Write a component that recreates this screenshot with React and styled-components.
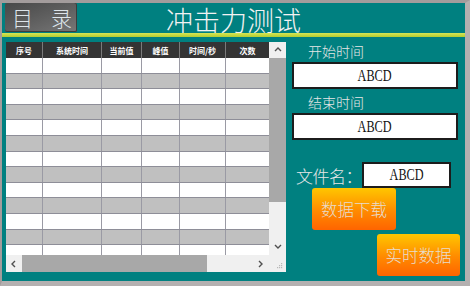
import React from 'react';
import styled, { createGlobalStyle } from 'styled-components';

const Global = createGlobalStyle`
  html, body { margin: 0; padding: 0; background: #ffffff; }
  #root { width: 470px; height: 286px; }
`;

const Frame = styled.div`
  box-sizing: border-box;
  width: 470px;
  height: 286px;
  background: #008080;
  border-style: solid;
  border-color: #a39c9c #b4b0b0 #b4b0b0 #a39c9c;
  border-width: 3px 5px 5px 2px;
  display: flex;
  flex-direction: column;
  font-family: "Noto Sans CJK SC", sans-serif;
  overflow: hidden;
`;

const Header = styled.header`
  height: 30px;
  flex: none;
  display: grid;
  grid-template-columns: 1fr auto 1fr;
  align-items: center;
`;

const MenuButton = styled.div`
  box-sizing: border-box;
  margin-left: 3px;
  width: 72px;
  height: 29px;
  align-self: start;
  justify-self: start;
  display: flex;
  align-items: center;
  gap: 18px;
  padding-left: 7px;
  background: linear-gradient(160deg, #484848 0%, #5c5c5c 45%, #777777 100%);
  border-radius: 2px;
  box-shadow: inset 0 -1px 0 #3c3c3c, inset -1px 0 0 #3c3c3c;
  color: #dde4ea;
  font-size: 21px;
  font-weight: 300;
  line-height: 1;
`;

const Title = styled.h1`
  margin: 0;
  padding-top: 4px;
  font-size: 27px;
  line-height: 26px;
  font-weight: 300;
  color: #f2f2f2;
  white-space: nowrap;
`;

const Rule = styled.div`
  height: 4px;
  flex: none;
  background: linear-gradient(#d6e656, #b2cc30);
`;

const Body = styled.main`
  flex: 1;
  display: flex;
  gap: 6px;
  padding: 5px 0 0 4px;
`;

const Table = styled.section`
  width: 280px;
  height: 230px;
  display: grid;
  grid-template-columns: 263px 17px;
  grid-template-rows: 213px 17px;
`;

const DataArea = styled.div`
  overflow: hidden;
  background: #ffffff;
`;

const COLS = '37px 59px 40px 38px 46px 43px';

const HeadRow = styled.div`
  display: grid;
  grid-template-columns: ${COLS};
  height: 16px;
  background: #343434;
`;

const HeadCell = styled.div`
  display: flex;
  align-items: center;
  justify-content: center;
  color: #ffffff;
  font-size: 8px;
  font-weight: 700;
  border-right: 1px solid #7a7a7a;
  white-space: nowrap;
  &:last-child { border-right: none; }
`;

const Row = styled.div`
  box-sizing: border-box;
  display: grid;
  grid-template-columns: ${COLS};
  height: 15.6px;
  border-bottom: 1px solid #8e8e98;
  background: ${p => (p.$shade ? '#c0c0c0' : '#ffffff')};
`;

const Cell = styled.div`
  border-right: 1px solid #9a9aa4;
  &:last-child { border-right: none; }
`;

const VScroll = styled.div`
  display: flex;
  flex-direction: column;
  background: #f0f0f0;
`;

const HScroll = styled.div`
  display: flex;
  background: #f0f0f0;
`;

const ArrowBox = styled.div`
  flex: none;
  width: ${p => p.$w || 17}px;
  height: ${p => p.$h || 17}px;
  display: flex;
  align-items: center;
  justify-content: center;
  background: #f0f0f0;
`;

const Thumb = styled.div`
  flex: none;
  background: #a8a8a8;
  width: ${p => (p.$horizontal ? `${p.$len}px` : 'auto')};
  height: ${p => (p.$horizontal ? 'auto' : `${p.$len}px`)};
`;

const Track = styled.div`
  flex: 1;
`;

const Corner = styled.div`
  background: #f0f0f0;
  display: flex;
  align-items: flex-end;
  justify-content: flex-end;
  padding: 0 3px 3px 0;
`;

const Panel = styled.aside`
  width: 169px;
  display: flex;
  flex-direction: column;
`;

const Label = styled.div`
  font-size: 14px;
  line-height: 18px;
  height: 18px;
  font-weight: 300;
  color: #e6e6e6;
  padding-left: 16px;
  margin-bottom: 2px;
`;

const Field = styled.div`
  box-sizing: border-box;
  width: ${p => p.$w}px;
  height: ${p => p.$h}px;
  border: 2px solid #1c1c1c;
  background: #ffffff;
  display: flex;
  align-items: center;
  justify-content: center;
  margin-bottom: ${p => p.$gap || 0}px;
  flex: none;
`;

const Value = styled.span`
  display: inline-block;
  font-family: "Liberation Serif", serif;
  font-size: 17px;
  color: #111111;
  transform: scaleX(0.72);
`;

const FileRow = styled.div`
  display: flex;
  align-items: center;
  margin-top: 22px;
  height: 26px;
`;

const FileLabel = styled.div`
  width: 66px;
  padding-left: 4px;
  font-size: 17px;
  font-weight: 300;
  color: #e6e6e6;
  white-space: nowrap;
  letter-spacing: -0.5px;
`;

const ActionButton = styled.button`
  box-sizing: border-box;
  width: ${p => p.$w}px;
  height: 42px;
  margin-left: ${p => p.$left}px;
  margin-top: ${p => p.$top || 0}px;
  border: none;
  border-radius: 3px;
  background: linear-gradient(#ffc600, #ff8a00 55%, #ff6400);
  color: #e8dccc;
  font-family: "Noto Sans CJK SC", sans-serif;
  font-size: 16.5px;
  font-weight: 300;
  padding: 0;
  flex: none;
`;

const Chevron = ({ dir }) => {
  const paths = {
    up: 'M1 5 L4 2 L7 5',
    down: 'M1 2 L4 5 L7 2',
    left: 'M5 1 L2 4 L5 7',
    right: 'M2 1 L5 4 L2 7',
  };
  return (
    <svg width="8" height="8" viewBox="0 0 8 8">
      <path d={paths[dir]} fill="none" stroke="#505050" strokeWidth="1.4" />
    </svg>
  );
};

const Grip = () => (
  <svg width="7" height="7" viewBox="0 0 7 7">
    {[[5, 1], [3, 3], [5, 3], [1, 5], [3, 5], [5, 5]].map(([x, y], i) => (
      <rect key={i} x={x} y={y} width="1.2" height="1.2" fill="#b8b8b8" />
    ))}
  </svg>
);

const headers = ['序号', '系统时间', '当前值', '峰值', '时间/秒', '次数'];
const rows = Array.from({ length: 13 }, (_, i) => i);

export default function App() {
  return (
    <>
      <Global />
      <Frame>
        <Header>
          <MenuButton>
            <span>目</span>
            <span>录</span>
          </MenuButton>
          <Title>冲击力测试</Title>
          <div />
        </Header>
        <Rule />
        <Body>
          <Table>
            <DataArea>
              <HeadRow>
                {headers.map(h => (
                  <HeadCell key={h}>{h}</HeadCell>
                ))}
              </HeadRow>
              {rows.map(r => (
                <Row key={r} $shade={r % 2 === 1}>
                  {headers.map(h => (
                    <Cell key={h} />
                  ))}
                </Row>
              ))}
            </DataArea>
            <VScroll>
              <ArrowBox $h={16}><Chevron dir="up" /></ArrowBox>
              <Thumb $len={144} />
              <Track />
              <ArrowBox><Chevron dir="down" /></ArrowBox>
            </VScroll>
            <HScroll>
              <ArrowBox $w={16}><Chevron dir="left" /></ArrowBox>
              <Thumb $horizontal $len={185} />
              <Track />
              <ArrowBox><Chevron dir="right" /></ArrowBox>
            </HScroll>
            <Corner><Grip /></Corner>
          </Table>
          <Panel>
            <Label>开始时间</Label>
            <Field $w={166} $h={27} $gap={4}><Value>ABCD</Value></Field>
            <Label>结束时间</Label>
            <Field $w={166} $h={27}><Value>ABCD</Value></Field>
            <FileRow>
              <FileLabel>文件名：</FileLabel>
              <Field $w={89} $h={26}><Value>ABCD</Value></Field>
            </FileRow>
            <ActionButton $w={84} $left={20}>数据下载</ActionButton>
            <ActionButton $w={83} $left={85} $top={4}>实时数据</ActionButton>
          </Panel>
        </Body>
      </Frame>
    </>
  );
}
